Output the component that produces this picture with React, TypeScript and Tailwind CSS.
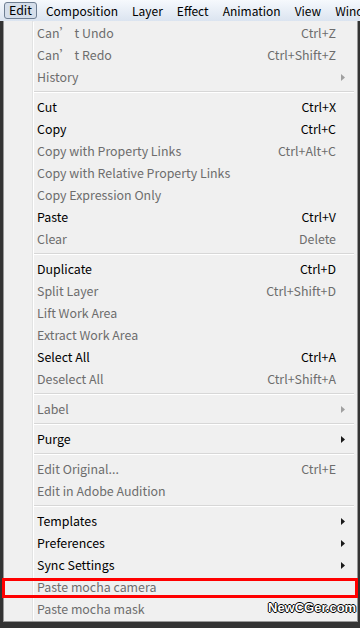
import React from 'react';

type Item =
  | { kind: 'sep' }
  | { kind: 'item'; label: string; shortcut?: string; disabled?: boolean; sub?: boolean };

const items: Item[] = [
  { kind: 'item', label: 'Can’ t Undo', shortcut: 'Ctrl+Z', disabled: true },
  { kind: 'item', label: 'Can’ t Redo', shortcut: 'Ctrl+Shift+Z', disabled: true },
  { kind: 'item', label: 'History', disabled: true, sub: true },
  { kind: 'sep' },
  { kind: 'item', label: 'Cut', shortcut: 'Ctrl+X' },
  { kind: 'item', label: 'Copy', shortcut: 'Ctrl+C' },
  { kind: 'item', label: 'Copy with Property Links', shortcut: 'Ctrl+Alt+C', disabled: true },
  { kind: 'item', label: 'Copy with Relative Property Links', disabled: true },
  { kind: 'item', label: 'Copy Expression Only', disabled: true },
  { kind: 'item', label: 'Paste', shortcut: 'Ctrl+V' },
  { kind: 'item', label: 'Clear', shortcut: 'Delete', disabled: true },
  { kind: 'sep' },
  { kind: 'item', label: 'Duplicate', shortcut: 'Ctrl+D' },
  { kind: 'item', label: 'Split Layer', shortcut: 'Ctrl+Shift+D', disabled: true },
  { kind: 'item', label: 'Lift Work Area', disabled: true },
  { kind: 'item', label: 'Extract Work Area', disabled: true },
  { kind: 'item', label: 'Select All', shortcut: 'Ctrl+A' },
  { kind: 'item', label: 'Deselect All', shortcut: 'Ctrl+Shift+A', disabled: true },
  { kind: 'sep' },
  { kind: 'item', label: 'Label', disabled: true, sub: true },
  { kind: 'sep' },
  { kind: 'item', label: 'Purge', sub: true },
  { kind: 'sep' },
  { kind: 'item', label: 'Edit Original...', shortcut: 'Ctrl+E', disabled: true },
  { kind: 'item', label: 'Edit in Adobe Audition', disabled: true },
  { kind: 'sep' },
  { kind: 'item', label: 'Templates', sub: true },
  { kind: 'item', label: 'Preferences', sub: true },
  { kind: 'item', label: 'Sync Settings', sub: true },
  { kind: 'item', label: 'Paste mocha camera', disabled: true },
  { kind: 'item', label: 'Paste mocha mask', disabled: true },
];

const menus = ['Composition', 'Layer', 'Effect', 'Animation', 'View', 'Window'];

const Arrow = ({ disabled }: { disabled?: boolean }) => (
  <svg width="4" height="7" viewBox="0 0 4 7">
    <path d="M0 0 L4 3.5 L0 7 Z" fill={disabled ? '#a0a0a0' : '#1a1a1a'} />
  </svg>
);

export default function App() {
  return (
    <div
      className="relative w-[360px] h-[628px] overflow-hidden bg-[#333333] leading-none"
      style={{ fontFamily: '"Noto Sans CJK SC", "Noto Sans", sans-serif' }}
    >
      {/* menu bar */}
      <div className="flex h-[21px] items-center bg-gradient-to-b from-[#f6f9fd] to-[#dbe4f0] text-[12px] text-black whitespace-nowrap">
        <div className="ml-[4px] mr-[2px] flex h-[17px] items-center rounded-[3px] border border-[#6f7f93] bg-[#d5deea] px-[4px] text-[12.4px]">
          Edit
        </div>
        {menus.map((m) => (
          <div key={m} className="px-[7px]">
            {m}
          </div>
        ))}
      </div>

      {/* dropdown */}
      <div className="ml-[3px] flex w-[355px] border border-t-0 border-[#979797] bg-[#f0f0f0] text-[12.4px]">
        <div className="w-[28px] shrink-0" />
        <div className="flex-1 border-l border-l-[#e2e3e3] pt-[1px] pb-[1px]">
          <div className="border-l border-l-white">
            {items.map((it, i) =>
              it.kind === 'sep' ? (
                <div key={i} className="flex h-[8px] flex-col justify-center pr-[3px]">
                  <div className="h-px bg-[#d7d7d7]" />
                  <div className="h-px bg-white" />
                </div>
              ) : (
                <div
                  key={i}
                  className={`flex h-[22px] items-center pl-[3px] ${
                    it.disabled ? 'text-[#6d6d6d]' : 'text-black'
                  }`}
                >
                  <span className="flex-1 whitespace-nowrap">{it.label}</span>
                  {it.shortcut && <span className="whitespace-nowrap">{it.shortcut}</span>}
                  <span className="flex w-[21px] items-center justify-start pl-[5px]">
                    {it.sub && <Arrow disabled={it.disabled} />}
                  </span>
                </div>
              )
            )}
          </div>
        </div>
      </div>

      {/* highlight box */}
      <div className="absolute left-[2px] top-[578px] h-[20px] w-[356px] border-[3px] border-[#ff0000]" />

      {/* watermark */}
      <div
        className="absolute left-[268px] top-[601px] text-[13px] font-bold text-white [text-shadow:1px_0_0_#000,-1px_0_0_#000,0_1px_0_#000,0_-1px_0_#000]"
        style={{ fontFamily: '"Liberation Sans", Arial, sans-serif' }}
      >
        NewCGer.com
      </div>
    </div>
  );
}
